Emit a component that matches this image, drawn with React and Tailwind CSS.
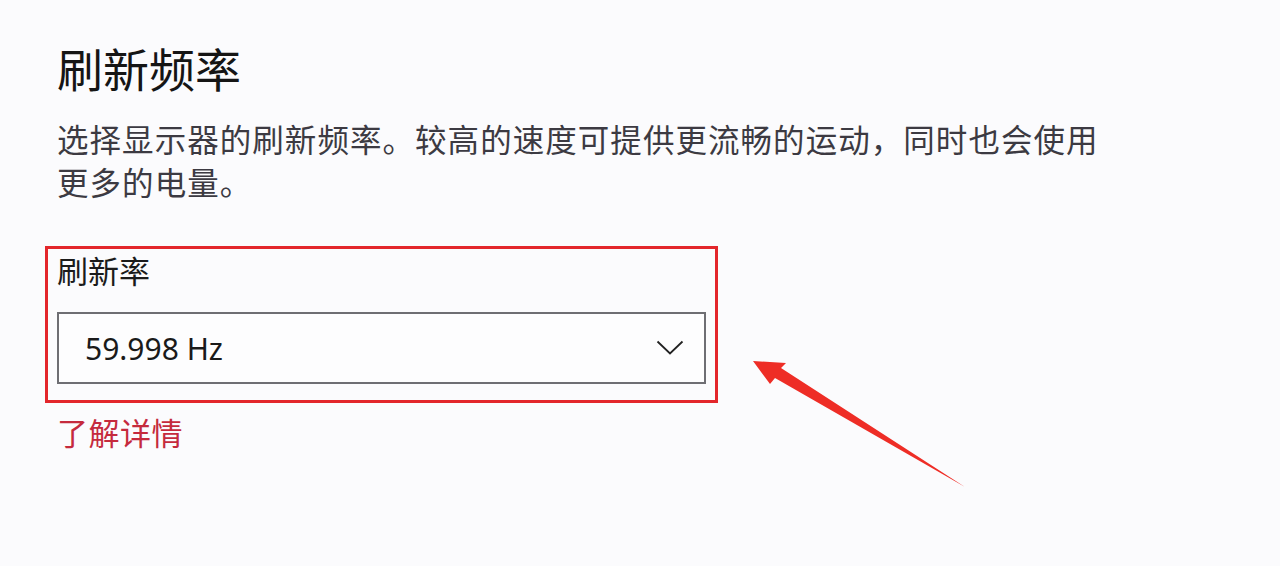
import React from "react";

const cjk = { fontFamily: '"Noto Sans CJK SC", "Noto Sans", sans-serif' };

export default function App() {
  return (
    <div className="relative h-[566px] w-full overflow-hidden bg-[#fbfbfd]" style={cjk}>
      <div className="flex flex-col pl-[57px] pt-[35px]">
        <h1 className="text-[46px] leading-[64px] font-normal text-[#151515]">刷新频率</h1>
        <p className="mt-[18px] max-w-[1056px] text-[31.5px] leading-[43px] tracking-[1.05px] text-[#3c3a42]">
          选择显示器的刷新频率。较高的速度可提供更流畅的运动，同时也会使用更多的电量。
        </p>
        <div className="mt-[43px] -ml-[12px] flex w-[673px] flex-col border-[3px] border-[#e3262b] px-[9px] pb-[16px]">
          <div className="text-[31px] leading-[42px] text-[#1b1b1b]">刷新率</div>
          <div className="mt-[21px] flex h-[72px] items-center justify-between border-2 border-[#6e6e73] bg-[#fdfdfe] pl-[26px] pr-[20px]">
            <span className="text-[30px] text-[#1a1a1a]" style={{ fontFamily: '"Noto Sans", sans-serif' }}>59.998 Hz</span>
            <svg width="28" height="16" viewBox="0 0 28 16" fill="none">
              <path d="M1.5 1.5 L14 13.5 L26.5 1.5" stroke="#222" strokeWidth="1.8" />
            </svg>
          </div>
        </div>
        <a className="mt-[7px] text-[31px] leading-[44px] tracking-[0.5px] text-[#c52a3d]">了解详情</a>
      </div>
      <svg className="pointer-events-none absolute inset-0" width="1280" height="566" viewBox="0 0 1280 566">
        <polygon points="753,361 786,363 781,368 965,487 775,378 770,384" fill="#ee2d26" />
      </svg>
    </div>
  );
}
